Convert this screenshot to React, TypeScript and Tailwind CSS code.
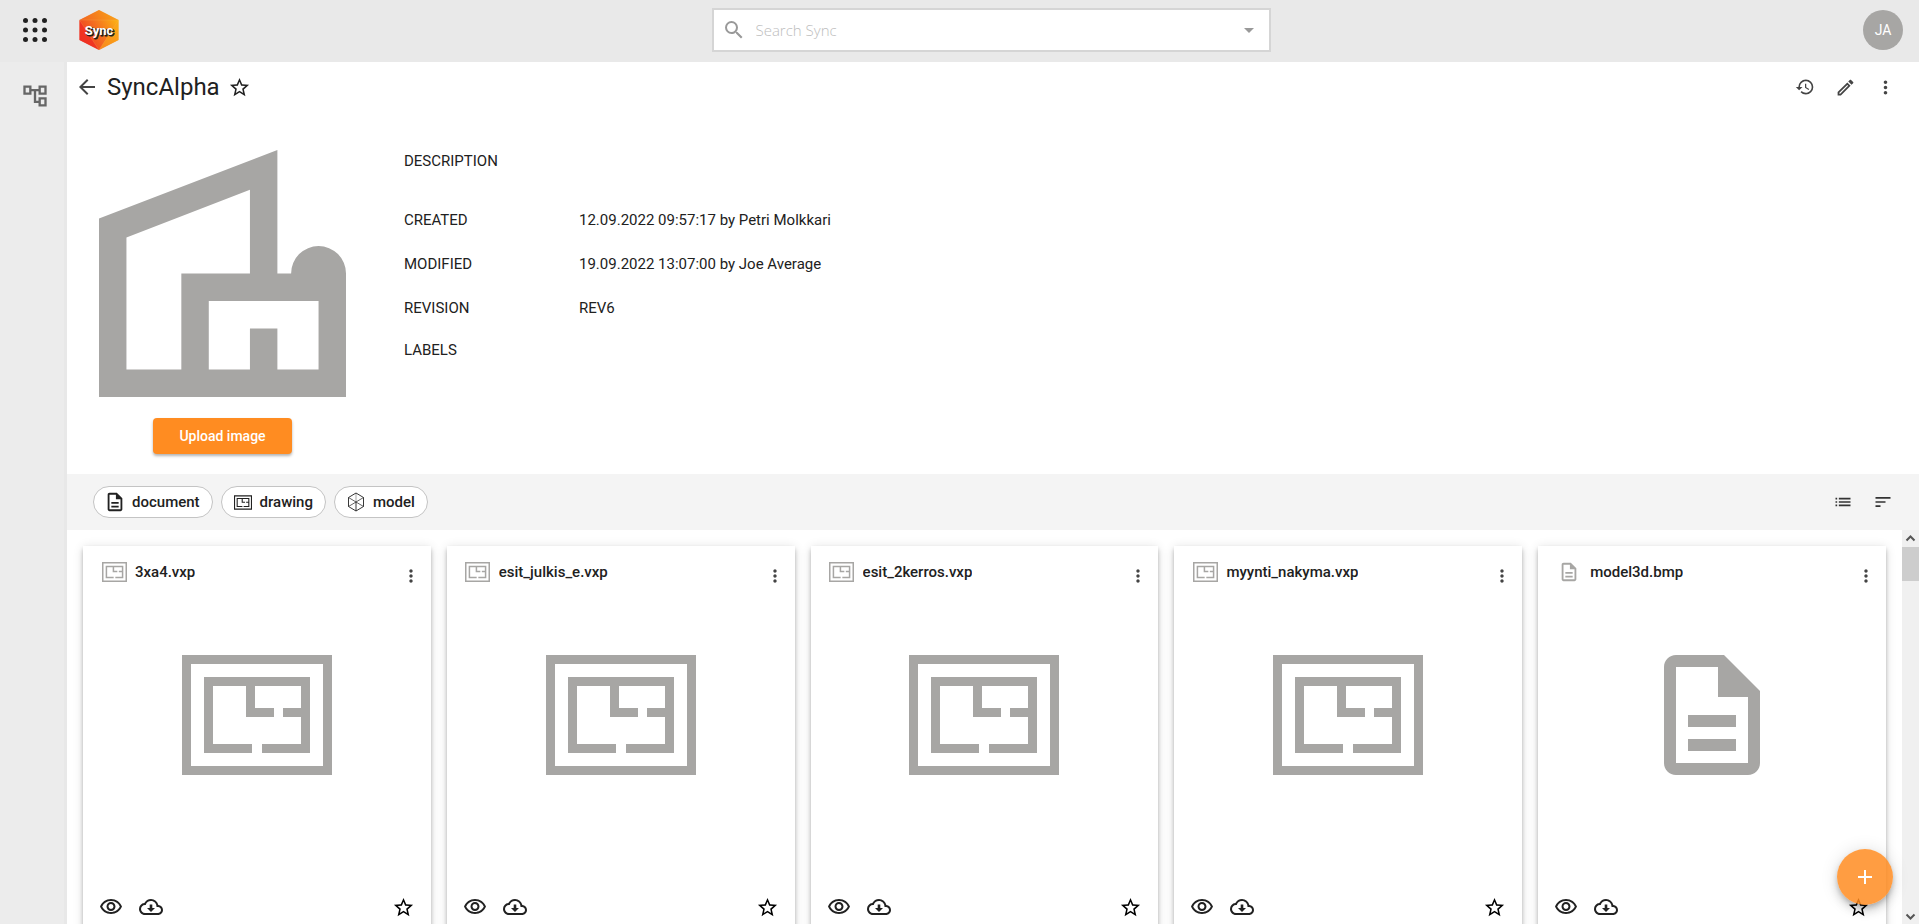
import React, { useState } from "react";
import {
    MdArrowBack,
    MdArrowDropDown,
    MdHistory,
    MdList,
    MdMoreVert,
    MdOutlineAccountTree,
    MdOutlineDescription,
    MdOutlineEdit,
    MdOutlineVisibility,
    MdSearch,
    MdSort,
    MdStarBorder,
} from "react-icons/md";

type FileKind = "drawing" | "document";

interface FileItem {
    name: string;
    kind: FileKind;
}

const FILES: FileItem[] = [
    { name: "3xa4.vxp", kind: "drawing" },
    { name: "esit_julkis_e.vxp", kind: "drawing" },
    { name: "esit_2kerros.vxp", kind: "drawing" },
    { name: "myynti_nakyma.vxp", kind: "drawing" },
    { name: "model3d.bmp", kind: "document" },
];

const DETAILS = [
    { label: "CREATED", value: "12.09.2022 09:57:17 by Petri Molkkari" },
    { label: "MODIFIED", value: "19.09.2022 13:07:00 by Joe Average" },
    { label: "REVISION", value: "REV6" },
    { label: "LABELS", value: "" },
];

function AppsIcon() {
    return (
        <svg viewBox="0 0 24 24" className="w-6 h-6" fill="currentColor">
            {[2.5, 12, 21.5].map((y) =>
                [2.5, 12, 21.5].map((x) => <circle key={`${x}-${y}`} cx={x} cy={y} r="2.5" />)
            )}
        </svg>
    );
}

function SyncLogo() {
    return (
        <svg viewBox="0 0 40 40" className="w-10 h-10" role="img" aria-label="Sync">
            <defs>
                <linearGradient id="hex" x1="0" y1="0.8" x2="1" y2="0.2">
                    <stop offset="0" stopColor="#ee3124" />
                    <stop offset="0.5" stopColor="#f4701f" />
                    <stop offset="1" stopColor="#fdb913" />
                </linearGradient>
            </defs>
            <path d="M20 0l19.500 10v20L20 40 .5 30V10z" fill="url(#hex)" />
            <path d="M20 0L.5 10h39z" fill="#f58220" opacity="0.45" />
            <path d="M.5 10L20 40 .5 30z" fill="#ee2a24" opacity="0.65" />
            <path d="M39.500 10L20 40l19.500-10z" fill="#fba919" opacity="0.6" />
            <path d="M.5 10h39L20 40z" fill="none" stroke="#fbb161" strokeWidth="0.4" opacity="0.6" />
            <g fontFamily="Roboto, sans-serif" fontWeight="700" fontSize="13" textAnchor="middle">
                <text x="21" y="26" fill="#1c1c1c" stroke="#1c1c1c" strokeWidth="1">Sync</text>
                <text x="20" y="25" fill="#ffffff">Sync</text>
            </g>
        </svg>
    );
}

function BuildingImage() {
    return (
        <svg viewBox="0 0 18 18" className="w-[247px] h-[247px] text-[#a7a6a4]" fill="currentColor">
            <path
                fillRule="evenodd"
                d="M0 5L13 0v9h1a2 2 0 0 1 4 0v9H0zM2 6.370V16h4V9h5V2.900zM8 11v5h3v-3h2v3h3v-5z"
            />
        </svg>
    );
}

function DrawingIcon({ className }: { className: string }) {
    return (
        <svg viewBox="0 0 150 120" className={className} fill="currentColor">
            <path fillRule="evenodd" d="M0 0h150v120H0zM9 9v102h132V9z" />
            <path d="M22 22h106v76H80v-9h39V62h-18v-9h18V31H73v22h19v9H64V31H31v58h39v9H22z" />
        </svg>
    );
}

function ModelIcon() {
    return (
        <svg viewBox="0 0 22 22" className="w-[22px] h-[22px]" fill="none" stroke="currentColor" strokeWidth="0.9">
            <path d="M11 2l7.500 4.500v9L11 20l-7.500-4.500v-9zM11 11v9" />
            <path d="M11 11l7.500-4.500M11 11L3.500 6.500M11 11l7.500 4.500M11 11l-7.500 4.500" strokeWidth="0.7" />
            <path d="M11 2v9" strokeWidth="0.4" />
        </svg>
    );
}

function CloudDownloadIcon() {
    return (
        <svg viewBox="0 0 24 24" className="w-6 h-6" fill="currentColor">
            <path d="M19.350 10.040A7.490 7.490 0 0 0 12 4C9.110 4 6.600 5.640 5.350 8.040A5.994 5.994 0 0 0 0 14c0 3.310 2.690 6 6 6h13c2.760 0 5-2.240 5-5 0-2.640-2.050-4.780-4.650-4.960zM19 18H6c-2.210 0-4-1.790-4-4s1.790-4 4-4h.710A5.500 5.500 0 0 1 12 6c3.040 0 5.500 2.460 5.500 5.500v.5H19c1.660 0 3 1.340 3 3s-1.340 3-3 3z" />
            <path d="M10.700 9.500h2.600v3.500h2.700l-4 4-4-4h2.700z" />
        </svg>
    );
}

interface IconButtonProps {
    label: string;
    className?: string;
    children: React.ReactNode;
}

function IconButton({ label, className = "", children }: IconButtonProps) {
    return (
        <button type="button" aria-label={label} className={`flex items-center justify-center ${className}`}>
            {children}
        </button>
    );
}

function FilterChip({ label, icon }: { label: string; icon: React.ReactNode }) {
    const [active, setActive] = useState(false);

    return (
        <button
            type="button"
            aria-pressed={active}
            onClick={() => setActive(!active)}
            className={`h-8 flex items-center gap-1.5 pl-2.5 pr-3 rounded-full border border-[#c4c4c4] text-[15px] font-medium ${active ? "bg-gray-200" : "bg-white"}`}
        >
            <span className="w-[22px] flex justify-center">{icon}</span>
            {label}
        </button>
    );
}

function FileCard({ file }: { file: FileItem }) {
    return (
        <article className="h-[400px] min-w-0 flex flex-col bg-white shadow-[0_2px_4px_-1px_rgba(0,0,0,0.2),0_4px_5px_rgba(0,0,0,0.14),0_1px_10px_rgba(0,0,0,0.12)]">
            <div className="flex items-start pl-[18px] pr-2.5 pt-4">
                <div className="flex flex-1 min-w-0 items-center gap-2 h-5 text-[#a7a6a4]">
                    <span className="w-[26px] flex justify-center">
                        {file.kind === "drawing" ? (
                            <DrawingIcon className="w-[25px] h-5" />
                        ) : (
                            <MdOutlineDescription size={22} />
                        )}
                    </span>
                    <h2 className="truncate text-[15px] leading-5 font-medium text-[#212121]">{file.name}</h2>
                </div>
                <IconButton label={`${file.name} menu`} className="w-5 h-7 text-[#444444]">
                    <MdMoreVert size={20} />
                </IconButton>
            </div>
            <div className="flex-1 flex items-center justify-center pb-8 text-[#a7a6a4]">
                {file.kind === "drawing" ? (
                    <DrawingIcon className="w-[150px] h-[120px]" />
                ) : (
                    <MdOutlineDescription size={144} />
                )}
            </div>
            <div className="h-[75px] flex items-start gap-4 px-4 pt-6">
                <IconButton label="View">
                    <MdOutlineVisibility size={24} />
                </IconButton>
                <IconButton label="Download">
                    <CloudDownloadIcon />
                </IconButton>
                <IconButton label="Add to favourites" className="ml-auto h-6 text-black">
                    <MdStarBorder size={23} />
                </IconButton>
            </div>
        </article>
    );
}

export default function App() {
    const [query, setQuery] = useState("");

    return (
        <div className="relative h-screen flex flex-col overflow-hidden bg-white text-[#212121] font-[Roboto,sans-serif]">
            <header className="h-[62px] shrink-0 flex items-center bg-[#e9e9e9] pl-[23px] pr-4 pb-0.5">
                <div className="flex-1 flex items-center gap-8">
                    <IconButton label="Apps">
                        <AppsIcon />
                    </IconButton>
                    <a href="#home">
                        <SyncLogo />
                    </a>
                </div>
                <div className="w-[559px] h-11 ml-14 flex items-center border-2 border-[#d5d5d5] bg-white text-[#999999]">
                    <MdSearch size={24} className="ml-2 shrink-0" />
                    <input
                        type="search"
                        aria-label="Search Sync"
                        placeholder="Search Sync"
                        value={query}
                        onChange={(e) => setQuery(e.target.value)}
                        className="flex-1 min-w-0 px-2.5 outline-none text-[15px] font-light font-['Open_Sans',sans-serif] text-gray-800 placeholder:text-[#bdbdbd]"
                    />
                    <IconButton label="Search options" className="mr-2">
                        <MdArrowDropDown size={24} />
                    </IconButton>
                </div>
                <div className="flex-1 flex justify-end">
                    <button type="button" className="w-10 h-10 rounded-full bg-[#a7a6a4] text-white text-[14px]">
                        JA
                    </button>
                </div>
            </header>

            <div className="flex flex-1 min-h-0">
                <nav className="w-[67px] shrink-0 flex flex-col items-center border-r-3 border-[#e8e8e8] bg-[#ececec] pt-5 pl-1.5">
                    <IconButton label="Project tree" className="text-[#666666]">
                        <MdOutlineAccountTree size={28} />
                    </IconButton>
                </nav>

                <main className="flex flex-1 flex-col min-w-0">
                    <div className="h-[52px] shrink-0 flex items-center pl-2 pr-3.5 pb-0.5 text-[#444444]">
                        <IconButton label="Back">
                            <MdArrowBack size={24} />
                        </IconButton>
                        <h1 className="mx-2 text-2xl text-[#212121]">SyncAlpha</h1>
                        <IconButton label="Add to favourites" className="text-[#212121]">
                            <MdStarBorder size={23} />
                        </IconButton>
                        <div className="ml-auto flex">
                            <IconButton label="History" className="w-10 h-10">
                                <MdHistory size={20} />
                            </IconButton>
                            <IconButton label="Edit" className="w-10 h-10">
                                <MdOutlineEdit size={21} />
                            </IconButton>
                            <IconButton label="More" className="w-10 h-10">
                                <MdMoreVert size={21} />
                            </IconButton>
                        </div>
                    </div>

                    <section className="h-[360px] shrink-0 flex items-start pl-8 pt-9">
                        <div className="flex flex-col items-center gap-[21px] mr-[58px]">
                            <BuildingImage />
                            <button
                                type="button"
                                className="h-9 px-[26px] rounded bg-[#ff8c21] text-white text-[14px] font-medium shadow-[0_2px_3px_rgba(0,0,0,0.3)]"
                            >
                                Upload image
                            </button>
                        </div>
                        <dl className="grid grid-cols-[175px_auto] grid-rows-[44px_44px_44px_42px_44px] text-[15px] leading-[22px]">
                            <dt>DESCRIPTION</dt>
                            <dd />
                            {DETAILS.map((item) => (
                                <React.Fragment key={item.label}>
                                    <dt className="pt-[15px]">{item.label}</dt>
                                    <dd className="pt-[15px]">{item.value}</dd>
                                </React.Fragment>
                            ))}
                        </dl>
                    </section>

                    <div className="h-14 shrink-0 flex items-center gap-2 bg-[#f4f4f4] pl-[26px] pr-4">
                        <FilterChip label="document" icon={<MdOutlineDescription size={22} />} />
                        <FilterChip label="drawing" icon={<DrawingIcon className="w-[18px] h-[15px]" />} />
                        <FilterChip label="model" icon={<ModelIcon />} />
                        <div className="ml-auto flex text-[#333333]">
                            <IconButton label="List view" className="w-10 h-10">
                                <MdList size={20} />
                            </IconButton>
                            <IconButton label="Sort" className="w-10 h-10">
                                <MdSort size={20} />
                            </IconButton>
                        </div>
                    </div>

                    <div className="flex flex-1 min-h-0">
                        <div className="flex-1 overflow-hidden grid grid-cols-5 content-start gap-4 p-4">
                            {FILES.map((file) => (
                                <FileCard key={file.name} file={file} />
                            ))}
                        </div>
                        <div className="w-[17px] shrink-0 flex flex-col items-center bg-[#f0f0f0] text-[#555555]" aria-hidden="true">
                            <svg viewBox="0 0 17 17" className="w-[17px] h-[17px]" fill="none" stroke="currentColor" strokeWidth="2">
                                <path d="M4.500 10.500l4-4 4 4" />
                            </svg>
                            <div className="w-full h-[34px] bg-[#cdcdcd]" />
                            <svg viewBox="0 0 17 17" className="w-[17px] h-[17px] mt-auto" fill="none" stroke="currentColor" strokeWidth="2">
                                <path d="M4.500 7.500l4 4 4-4" />
                            </svg>
                        </div>
                    </div>
                </main>
            </div>

            <button
                type="button"
                aria-label="Add"
                className="absolute right-[26px] bottom-[19px] w-14 h-14 rounded-full flex items-center justify-center bg-[#ff8c21]/85 text-white shadow-[0_3px_5px_-1px_rgba(0,0,0,0.2),0_6px_10px_rgba(0,0,0,0.14),0_1px_18px_rgba(0,0,0,0.12)]"
            >
                <svg viewBox="0 0 14 14" className="w-3.5 h-3.5" fill="currentColor">
                    <path d="M6 0h2v6h6v2H8v6H6V8H0V6h6z" />
                </svg>
            </button>
        </div>
    );
}
